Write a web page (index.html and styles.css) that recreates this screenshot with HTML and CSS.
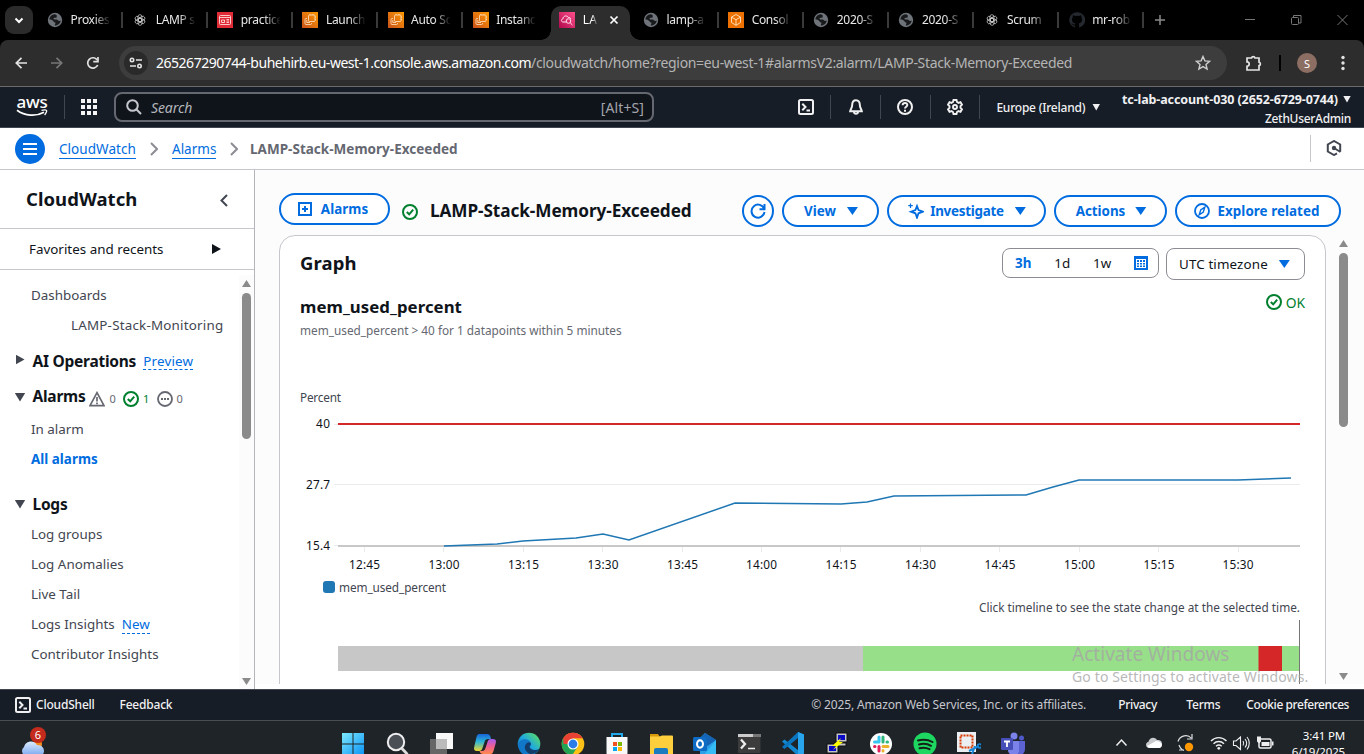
FILE: index.html
```html
<!DOCTYPE html>
<html lang="en">
<head>
<meta charset="utf-8">
<title>LAMP-Stack-Memory-Exceeded | CloudWatch</title>
<link rel="stylesheet" href="styles.css">
</head>
<body>
<svg class="defs" aria-hidden="true">
  <linearGradient id="gOr" x1="0" y1="1" x2="1" y2="0"><stop offset="0" stop-color="#c8511b"/><stop offset="1" stop-color="#f90"/></linearGradient>
  <linearGradient id="gPk" x1="0" y1="1" x2="1" y2="0"><stop offset="0" stop-color="#b0084d"/><stop offset="1" stop-color="#ff4f8b"/></linearGradient>
  <linearGradient id="gWin" x1="0" y1="0" x2="1" y2="1"><stop offset="0" stop-color="#7ee8ff"/><stop offset="1" stop-color="#0a94f5"/></linearGradient>
  <linearGradient id="gCp1" x1="0" y1="0" x2="0" y2="1"><stop offset="0" stop-color="#1763d8"/><stop offset=".45" stop-color="#2cb5d8"/><stop offset="1" stop-color="#f0d72c"/></linearGradient>
  <linearGradient id="gCp2" x1="0" y1="0" x2="0" y2="1"><stop offset="0" stop-color="#a45cf0"/><stop offset=".5" stop-color="#ef5f92"/><stop offset="1" stop-color="#ff8b4a"/></linearGradient>
  <linearGradient id="gEd" x1="0" y1="1" x2="1" y2="0"><stop offset="0" stop-color="#0c59a4"/><stop offset=".5" stop-color="#1fa8e0"/><stop offset="1" stop-color="#62e64f"/></linearGradient>
  <linearGradient id="gCl" x1="0" y1="0" x2="0" y2="1"><stop offset="0" stop-color="#dcecff"/><stop offset="1" stop-color="#7fabf0"/></linearGradient>
  <symbol id="globe" viewBox="0 0 16 16"><circle cx="8" cy="8" r="7.2" fill="#6f747b"/><path d="M7.2 2.2C4 2.8 2.4 5.3 2.4 7.6c1.8 0 2.6.3 3.6 1.2 1 .9 1 1.8 2.4 1.8.3 1.2-.6 1.5-.6 3 3.6 0 5.7-2.600 5.900-5-1 .5-2.100.500-2.900-.4C9.900 7 8.300 8 6.300 7.100c.2-1.700 2-1.300 3.300-1.700.5-.8-.2-1.200.2-2.200-.8-.6-1.600-1-2.600-1z" fill="#17191b"/></symbol>
  <symbol id="gpt" viewBox="0 0 16 16"><g fill="none" stroke="#c4c4c4" stroke-width=".8"><rect id="gl" x="5.900" y="2.700" width="4" height="7" rx="2"/><use href="#gl" transform="rotate(60 8 8)"/><use href="#gl" transform="rotate(120 8 8)"/><use href="#gl" transform="rotate(180 8 8)"/><use href="#gl" transform="rotate(240 8 8)"/><use href="#gl" transform="rotate(300 8 8)"/></g></symbol>
  <symbol id="ec2" viewBox="0 0 16 16"><path d="M0 0h16v16H0z" fill="url(#gOr)"/><g fill="none" stroke="#ffe6c8" stroke-width=".8"><rect x="6.500" y="3" width="6.500" height="6.500" rx="1"/><path d="M5 6.500H4q-1 0-1 1v4q0 1 1 1h4.500q1 0 1-1v-.500M4.800 8v2.500H8M8 3V2M11 3V2M13 5h1M13 7.500h1"/></g></symbol>
  <symbol id="red" viewBox="0 0 16 16"><path d="M0 0h16v16H0z" fill="#e02c36"/><g fill="none" stroke="#ffd9d9" stroke-width=".9"><rect x="2.500" y="3.500" width="11" height="9" rx="1"/><path d="M2.500 5.500h11M4.500 8h3v2.500h-3zM9.500 7.500H12M9.500 9H12M9.500 10.500H12"/></g></symbol>
  <symbol id="cw" viewBox="0 0 16 16"><path d="M0 0h16v16H0z" fill="url(#gPk)"/><g fill="none" stroke="#ffe3ee" stroke-width="1"><path d="M7 10H4C1.800 9.800 2 6.900 4 6.800 4 3.500 8.500 3.100 9.300 5.500c1.400-.4 2.200.3 2.400 1.300"/><circle cx="9.500" cy="9" r="2.300"/><path d="m11.200 10.800 2.300 2.300"/></g></symbol>
  <symbol id="cube" viewBox="0 0 16 16"><path d="M0 0h16v16H0z" fill="#ed7100"/><path d="m8 2.500 4.500 2.600v5.400L8 13.300 3.500 10.500V5.100zM3.500 5.100 8 7.700l4.500-2.600M8 7.700v5.600" fill="none" stroke="#ffe6c8" stroke-width=".9"/></symbol>
  <symbol id="gh" viewBox="0 0 16 16"><path d="M8 .3a7.700 7.700 0 0 0-2.500 15c.4.100.5-.1.500-.4v-1.500c-2.100.4-2.700-.9-2.700-1-.5-1-.9-1.100-.9-1.100-.5-.4 0-.4 0-.4.700 0 1.200.8 1.200.8.700 1.200 1.900.8 2.400.6 0-.5.300-.8.500-1-1.800-.2-3.500-.9-3.500-3.900 0-.8.300-1.500.8-2.100-.1-.200-.400-1 .1-2.100 0 0 .7-.2 2.200.8a7.500 7.500 0 0 1 3.900 0c1.500-1 2.200-.8 2.200-.8.500 1.100.2 1.900.1 2.100.500.600.8 1.300.8 2.100 0 3-1.800 3.700-3.500 3.900.300.3.500.8.500 1.500V15c0 .200.100.500.500.400A7.700 7.700 0 0 0 8 .3z" fill="#24292f"/></symbol>
  <symbol id="ok" viewBox="0 0 16 16"><g fill="none" stroke="currentColor" stroke-width="2"><circle cx="8" cy="8" r="7"/><path d="m4.800 8 2.400 2.300 4-4.700"/></g></symbol>
  <symbol id="shell" viewBox="0 0 16 16"><g fill="none" stroke="currentColor" stroke-width="2"><rect x="1" y="1" width="14" height="14" rx="1.500"/><path d="m4.300 4.800 3.200 3.200-3.200 3.200M8.500 11.500H12"/></g></symbol>
</svg>

<div class="chrome">
<div class="tabs">
  <div class="tabsearch"><svg width="10" height="7" viewBox="0 0 10 7"><path d="m1.500 1.500 3.500 3.500 3.500-3.500" fill="none" stroke="#fff" stroke-width="2"/></svg></div>
  <div class="tab"><svg><use href="#globe"/></svg><span>Proxies</span></div>
  <div class="tab"><svg><use href="#gpt"/></svg><span>LAMP s</span></div>
  <div class="tab"><svg><use href="#red"/></svg><span>practice</span></div>
  <div class="tab"><svg><use href="#ec2"/></svg><span>Launch</span></div>
  <div class="tab"><svg><use href="#ec2"/></svg><span>Auto Sc</span></div>
  <div class="tab nosep"><svg><use href="#ec2"/></svg><span>Instanc</span></div>
  <div class="tab active"><svg><use href="#cw"/></svg><span>LA</span><svg class="x" viewBox="0 0 10 10"><path d="m1.500 1.500 7 7m0-7-7 7" stroke="#fff" stroke-width="1.700"/></svg></div>
  <div class="tab"><svg><use href="#globe"/></svg><span>lamp-a</span></div>
  <div class="tab"><svg><use href="#cube"/></svg><span>Consol</span></div>
  <div class="tab"><svg><use href="#globe"/></svg><span>2020-S</span></div>
  <div class="tab"><svg><use href="#globe"/></svg><span>2020-S</span></div>
  <div class="tab"><svg><use href="#gpt"/></svg><span>Scrum</span></div>
  <div class="tab"><svg><use href="#gh"/></svg><span>mr-rob</span></div>
  <svg class="plus" viewBox="0 0 12 12"><path d="M6 1v10M1 6h10" stroke="#8a8a8a" stroke-width="1.500"/></svg>
  <svg class="winctl" viewBox="0 0 106 14"><g fill="none" stroke="#777"><path d="M1 6.500h10M93.500 2l10 10m0-10-10 10"/><rect x="47.500" y="4.500" width="7" height="7" rx="1"/><path d="M49.500 4.500v-2h7.500v7.500h-2"/></g></svg>
</div>

<div class="toolbar">
  <svg class="navi" width="92" height="16" viewBox="0 0 92 16"><g fill="none" stroke-width="1.700"><path d="M13 8H2.500M7.500 2.800 2.300 8l5.200 5.200" stroke="#e3e3e3"/><path d="M37 8h10.500M42.500 2.800 47.700 8l-5.200 5.200" stroke="#777"/><path d="M83.200 5A5.200 5.200 0 1 0 83.700 10" stroke="#e3e3e3"/><path d="M84 2v4.700h-4.700" stroke="#e3e3e3"/></g></svg>
  <div class="omni">
    <div class="site"><svg width="14" height="12" viewBox="0 0 14 12"><g fill="none" stroke="#e3e3e3" stroke-width="1.600"><circle cx="3" cy="3" r="1.700"/><path d="M7 3h6M1 9h6"/><circle cx="10.500" cy="9" r="1.700"/></g></svg></div>
    <span class="host">265267290744-buhehirb.eu-west-1.console.aws.amazon.com</span><span class="path">/cloudwatch/home?region=eu-west-1#alarmsV2:alarm/LAMP-Stack-Memory-Exceeded</span>
    <svg class="star" width="16" height="16" viewBox="0 0 16 16"><path d="m8 1.500 1.900 4.400 4.700.4L11 9.400l1.100 4.700L8 11.600l-4.100 2.500L5 9.400 1.400 6.300l4.700-.4z" fill="none" stroke="#cfcfcf" stroke-width="1.400"/></svg>
  </div>
  <svg class="ext" width="18" height="18" viewBox="0 0 18 18"><path d="M2 4h4.500a1.800 1.800 0 0 1 3.500 0H14v4.200a1.800 1.800 0 0 1 0 3.500V16H2v-3.700a2.200 2.200 0 0 0 0-4.400z" fill="none" stroke="#e3e3e3" stroke-width="1.700"/></svg>
  <div class="bar"></div>
  <div class="avatar">S</div>
  <svg class="kebab" width="4" height="16" viewBox="0 0 4 16"><g fill="#e3e3e3"><circle cx="2" cy="2.500" r="1.700"/><circle cx="2" cy="8" r="1.700"/><circle cx="2" cy="13.500" r="1.700"/></g></svg>
</div>
</div>

<div class="awsnav">
  <div class="logo"><span>aws</span><svg width="32" height="8" viewBox="0 0 32 8"><path d="M1 1.200c8 6 19 6.500 27 2" fill="none" stroke="#fff" stroke-width="1.700"/><path d="M25.500 1.300c2.200-.6 4.500-.5 5 .1s-.4 3-1.900 4.600" fill="none" stroke="#fff" stroke-width="1.300"/></svg></div>
  <i class="vsep v1"></i>
  <svg class="grid" width="16" height="16" viewBox="0 0 16 16" fill="#f5f5f5"><path d="M0 0h4v4H0zM6 0h4v4H6zM12 0h4v4h-4zM0 6h4v4H0zM6 6h4v4H6zM12 6h4v4h-4zM0 12h4v4H0zM6 12h4v4H6zM12 12h4v4h-4z"/></svg>
  <div class="search"><svg width="16" height="16" viewBox="0 0 16 16"><g fill="none" stroke="#c6c6cd" stroke-width="2"><circle cx="6.500" cy="6.500" r="5.300"/><path d="m10.300 10.300 4.700 4.700"/></g></svg><em>Search</em><span>[Alt+S]</span></div>
  <div class="tools">
    <svg><use href="#shell"/></svg><i class="vsep"></i>
    <svg viewBox="0 0 16 16"><path d="M8 1.200c-2.800 0-3.800 2.100-3.800 4.600 0 3.200-1.700 4.400-2 6.400h11.600c-.3-2-2-3.200-2-6.400C11.800 3.300 10.800 1.200 8 1.200zM6 13c.2 2.400 3.800 2.400 4 0" fill="none" stroke="#f0f0f0" stroke-width="2"/></svg><i class="vsep"></i>
    <svg viewBox="0 0 16 16"><g fill="none" stroke="#f0f0f0" stroke-width="2"><circle cx="8" cy="8" r="7"/><path d="M5.600 6.300c.2-3.100 4.800-2.900 4.700-.3C10.300 7.800 8 7.600 8 9.600M8 10.800v2"/></g></svg><i class="vsep"></i>
    <svg viewBox="0 0 16 16"><g fill="none" stroke="#f0f0f0" stroke-width="1.900"><path d="M6.500 1h3l.5 2 1.500.9 2-.7 1.500 2.500L13.500 7.200v1.600l1.500 1.500-1.500 2.500-2-.7L10 13l-.5 2h-3L6 13l-1.500-.9-2 .7L1 10.300l1.500-1.500V7.200L1 5.700l1.500-2.500 2 .7L6 3z"/><circle cx="8" cy="8" r="2"/></g></svg><i class="vsep"></i>
  </div>
  <div class="region">Europe (Ireland)<b class="tri sm"></b></div>
  <div class="account"><div class="acct">tc-lab-account-030 (2652-6729-0744)<b class="tri sm"></b></div><div class="user">ZethUserAdmin</div></div>
</div>

<div class="crumbs">
  <div class="burger"><i></i><i></i><i></i></div>
  <a>CloudWatch</a>
  <svg class="chev" viewBox="0 0 8 14"><path d="m1 1 6 6-6 6" fill="none" stroke="#8c8c94" stroke-width="2"/></svg>
  <a class="al">Alarms</a>
  <svg class="chev" viewBox="0 0 8 14"><path d="m1 1 6 6-6 6" fill="none" stroke="#8c8c94" stroke-width="2"/></svg>
  <span class="here">LAMP-Stack-Memory-Exceeded</span>
  <div class="hex"><svg width="16" height="16" viewBox="0 0 16 16"><path d="M11 13.300 8 15l-6.200-3.500v-7L8 1l6.200 3.500v7.200M8 8l6.500 4" fill="none" stroke="#424650" stroke-width="2"/><circle cx="8" cy="8" r="2.200" fill="#424650"/></svg></div>
</div>

<div class="body">
  <aside>
    <div class="shead"><span>CloudWatch</span><svg width="8" height="13" viewBox="0 0 8 13"><path d="M7 1 1.500 6.500 7 12" fill="none" stroke="#424650" stroke-width="2"/></svg></div>
    <div class="fav"><span>Favorites and recents</span><b class="rt"></b></div>
    <div class="scroller">
      <nav>
        <div class="row">Dashboards</div>
        <div class="row sub">LAMP-Stack-Monitoring</div>
        <div class="row sec ai"><b class="rt g"></b><strong>AI Operations</strong><a class="dash">Preview</a></div>
        <div class="row sec alr"><b class="tri g"></b><strong>Alarms</strong>
          <svg viewBox="0 0 16 16"><path d="M8 1.700 15 14.700H1zM8 6v4.500M8 11.500v1.800" fill="none" stroke="#656871" stroke-width="1.700"/></svg><small>0</small>
          <svg class="green"><use href="#ok"/></svg><small class="green">1</small>
          <svg viewBox="0 0 16 16"><circle cx="8" cy="8" r="7" fill="none" stroke="#656871" stroke-width="1.800"/><path d="M4 7h2v2H4zM7 7h2v2H7zM10 7h2v2h-2z" fill="#656871"/></svg><small>0</small></div>
        <div class="row">In alarm</div>
        <div class="row cur">All alarms</div>
        <div class="row sec lg"><b class="tri g"></b><strong>Logs</strong></div>
        <div class="row">Log groups</div>
        <div class="row">Log Anomalies</div>
        <div class="row">Live Tail</div>
        <div class="row">Logs Insights<a class="dash nw">New</a></div>
        <div class="row">Contributor Insights</div>
      </nav>
      <div class="sb side"><b class="up"></b><i></i><b class="dn"></b></div>
    </div>
  </aside>

  <main>
    <div class="head">
      <div class="btn alarms"><svg width="14" height="14" viewBox="0 0 14 14"><path d="M1 1h12v12H1zM7 4v6M4 7h6" fill="none" stroke="currentColor" stroke-width="2"/></svg>Alarms</div>
      <svg class="okh green"><use href="#ok"/></svg>
      <h1>LAMP-Stack-Memory-Exceeded</h1>
      <div class="acts">
        <div class="btn rf"><svg width="16" height="16" viewBox="0 0 16 16"><path d="M14.200 6A6.500 6.500 0 1 0 14.500 9M14.500 1v5.200H9.500" fill="none" stroke="currentColor" stroke-width="2"/></svg></div>
        <div class="btn vw">View<b class="tri"></b></div>
        <div class="btn iv"><svg width="16" height="16" viewBox="0 0 16 16"><path d="M9 3 10.500 7 15 8.700 10.500 10.300 9 14.700 7.400 10.300 3 8.700 7.400 7z" fill="none" stroke="currentColor" stroke-width="1.800"/><path d="M2.500.5v4.500M.3 2.700h4.500" stroke="currentColor" stroke-width="1.200"/></svg>Investigate<b class="tri"></b></div>
        <div class="btn ac">Actions<b class="tri"></b></div>
        <div class="btn ex"><svg width="16" height="16" viewBox="0 0 16 16"><g fill="none" stroke="currentColor"><circle cx="8" cy="8" r="7" stroke-width="1.800"/><path d="M10.800 4.200 9.300 9 5.200 11.800 6.700 7z" stroke-width="1.400"/></g></svg>Explore related</div>
      </div>
    </div>
    <div class="pane">
      <section class="card">
        <div class="ctop"><h2>Graph</h2>
          <div class="seg"><b>3h</b><span>1d</span><span>1w</span><svg width="14" height="14" viewBox="0 0 14 14"><path d="M0 0h14v14H0z" fill="#006ce0"/><path d="M2 3h10v9H2z" fill="#fff"/><path d="M3 4h2v2H3zM6 4h2v2H6zM9 4h2v2H9zM3 7h2v1.500H3zM6 7h2v1.500H6zM9 7h2v1.500H9zM3 9.500h2V11H3zM6 9.500h2V11H6zM9 9.500h2V11H9z" fill="#006ce0"/></svg></div>
          <div class="tz">UTC timezone<b class="tri bl"></b></div>
        </div>
        <div class="mrow"><h3>mem_used_percent</h3><div class="okk green"><svg><use href="#ok"/></svg>OK</div></div>
        <p class="desc">mem_used_percent &gt; 40 for 1 datapoints within 5 minutes</p>
        <svg class="chart" width="1005" height="210" viewBox="300 388 1005 210">
          <g class="lab"><text x="300" y="402" textLength="41" class="mut">Percent</text>
            <text x="316" y="428" textLength="14">40</text><text x="306" y="489" textLength="24">27.7</text><text x="306" y="550" textLength="24">15.4</text></g>
          <path d="M334 424.500h5M334 484.500h966M334 545.500h4M364.500 547v5M443.500 547v5M523.500 547v5M602.500 547v5M682.500 547v5M761.500 547v5M840.500 547v5M920.500 547v5M999.500 547v5M1079.500 547v5M1158.500 547v5M1238.500 547v5" stroke="#e9ebed"/>
          <path d="M338 546h962" stroke="#c8c8c8" stroke-width="2"/>
          <path d="M338 424h962" stroke="#d62728" stroke-width="2"/>
          <polyline points="444,546 497,544 523,541 576,538 603,534 629,540 735,503 841,504 867,502 894,496 1026,495 1053,487 1079,480 1238,480 1291,478" fill="none" stroke="#1f77b4" stroke-width="1.500"/>
          <g class="lab mid"><text x="364.500" y="569" textLength="31">12:45</text><text x="444" y="569" textLength="31">13:00</text><text x="523.500" y="569" textLength="31">13:15</text><text x="603" y="569" textLength="31">13:30</text><text x="682.500" y="569" textLength="31">13:45</text><text x="761.500" y="569" textLength="31">14:00</text><text x="841" y="569" textLength="31">14:15</text><text x="920.500" y="569" textLength="31">14:30</text><text x="1000" y="569" textLength="31">14:45</text><text x="1079.500" y="569" textLength="31">15:00</text><text x="1159" y="569" textLength="31">15:15</text><text x="1238" y="569" textLength="31">15:30</text></g>
          <rect x="323" y="581" width="12" height="12" rx="3" fill="#1f77b4"/>
          <g class="lab"><text x="339" y="592" textLength="107" class="mut">mem_used_percent</text></g>
        </svg>
        <p class="click">Click timeline to see the state change at the selected time.</p>
        <svg class="chart" width="1005" height="70" viewBox="300 618 1005 70"><path d="M338 646h525v25H338z" fill="#c7c7c7"/><path d="M863 646h437v25H863z" fill="#98df8a"/><path d="M1258.500 646H1282v25h-23.500z" fill="#d62728"/><path d="M1299.500 620v68" stroke="#777"/></svg>
      </section>
      <div class="sb mainsb"><b class="up"></b><i></i><b class="dn"></b></div>
    </div>
  </main>
</div>

<footer>
  <svg><use href="#shell"/></svg><span class="cs">CloudShell</span><span class="fb">Feedback</span>
  <div class="legal"><span class="copy">© 2025, Amazon Web Services, Inc. or its affiliates.</span><span class="pv">Privacy</span><span class="tm">Terms</span><span class="ck">Cookie preferences</span></div>
</footer>

<div class="taskbar">
  <div class="weather"><svg width="26" height="16" viewBox="0 0 26 16"><circle cx="19" cy="5" r="4" fill="#f28a1c"/><path d="M5 16a5 5 0 0 1 0-8C6 2 15 0 18 6c5 0 7 3 7 6 0 2-1 4-3 4z" fill="url(#gCl)"/></svg><span>6</span></div>
  <div class="apps">
    <svg viewBox="0 0 24 24"><path d="M1 1h10.500v10.500H1zM12.500 1H23v10.500H12.500zM1 12.500h10.500V23H1zM12.500 12.500H23V23H12.500z" fill="url(#gWin)"/></svg>
    <svg viewBox="0 0 24 24"><circle cx="11" cy="10" r="8.200" fill="#4a4f55" stroke="#eee" stroke-width="2"/><path d="m16.500 16 6 6.500" stroke="#ddd" stroke-width="2.800"/></svg>
    <svg viewBox="0 0 24 24"><path d="M7 1h17v16H7z" fill="#f8f8f8"/><path d="M1 7h17v17H1z" fill="#666"/><path d="M7 7h11v10H7z" fill="#bbb"/></svg>
    <svg viewBox="0 0 24 24"><path d="M6 2h8c2 0 3 1 3.500 3L18 7h-3c-2 0-3 1-3.500 3l-2 6c-.5 2-1.500 3-3.500 3H4c-2.500 0-3.500-1.500-2.800-4L3.500 5C4 3 5 2 6 2z" fill="url(#gCp1)"/><path d="M18 22h-8c-2 0-3-1-3.500-3h2.500c2 0 3-1 3.500-3l2-6c.5-2 1.500-3 3.500-3h2c2.500 0 3.500 1.500 2.800 4L20.500 19c-.5 2-1.500 3-2.500 3z" fill="url(#gCp2)"/></svg>
    <svg viewBox="0 0 24 24"><circle cx="12" cy="12" r="11.300" fill="url(#gEd)"/><path d="M1 14C1 6 12 5 14 11c1 3-2 3-1 5 1 3 7 3 9 1-3 7-15 9-19 2z" fill="#1177c8"/><path d="M10 11c-4 3-2 9 3 11 4 0 8-2 9.500-5-4 2-10 1-10-3 1-1 2-2 1-3-1-1-2-1-3.500 0z" fill="#123c69"/></svg>
    <svg viewBox="0 0 24 24"><circle cx="12" cy="12" r="11.300" fill="#fbc116"/><path d="M12 12 2.200 6.300A11.300 11.300 0 0 0 11 23.300L16.800 14.500z" fill="#23a455"/><path d="M12 12H2.500L2.200 6.300A11.300 11.300 0 0 1 21.800 6.300H12z" fill="#e94235"/><circle cx="12" cy="12" r="5.500" fill="#fff"/><circle cx="12" cy="12" r="4.400" fill="#2a7de9"/></svg>
    <svg viewBox="0 0 24 24"><path d="M7 6V2h10v4" fill="none" stroke="#22a7e8" stroke-width="2"/><path d="M1.500 5h21v16q0 2-2 2h-17q-2 0-2-2z" fill="#f8f8f8"/><path d="M8 10h4v4H8z" fill="#f25022"/><path d="M13 10h4v4h-4z" fill="#7fba00"/><path d="M8 15h4v4H8z" fill="#00a4ef"/><path d="M13 15h4v4h-4z" fill="#ffb900"/></svg>
    <svg viewBox="0 0 24 24"><path d="M1 2h8l2 3H1z" fill="#d89a0a"/><path d="M1 4.500h9.500L13 3.500h10q1 0 1 1V22H1z" fill="#fdcf3c"/><path d="M5 22v-4q0-2 2-2h10q2 0 2 2v4z" fill="#1b7bc0"/></svg>
    <svg viewBox="0 0 24 24"><path d="m12 1 11 7v15H7V6z" fill="#2b9fe8"/><path d="m12 1 11 7-10 7-7-8z" fill="#1563b5"/><path d="M23 8v15H11z" fill="#35bbf5"/><rect x="0" y="5" width="14" height="14" rx="1.500" fill="#0f6cc4"/><ellipse cx="7" cy="12" rx="3" ry="3.700" fill="none" stroke="#fff" stroke-width="2"/></svg>
    <svg viewBox="0 0 24 24"><rect x="1" y="2" width="22.500" height="19" rx="1" fill="#3c3c3c"/><path d="M1 2h22.500v3H1z" fill="#ccc"/><path d="M16 2h7.500v3H16z" fill="#777"/><path d="m4 7.500 4 4.500-4 4.500" fill="none" stroke="#eee" stroke-width="2.300"/><path d="M11 16.500h7" stroke="#eee" stroke-width="1.500"/></svg>
    <svg viewBox="0 0 24 24"><path d="m17 0 6 2.500v19L17 24 1 9.500l2.500-2L17 18z" fill="#1388d1"/><path d="M17 0v6L3.500 17 1 15z" fill="#0b74bf"/><path d="m17 0 6 2.500v19L17 24z" fill="#29a5ee"/></svg>
    <svg viewBox="0 0 24 24"><g fill="#c5c5c5" stroke="#111"><path d="M11 1h11v9H11zM9 11h12v3H9zM2 12h11v9H2zM0 22h14v3H0z"/></g><path d="M13 3h7v5h-7zM4 14h7v5H4z" fill="#0909c8"/><path d="m16 6-9 8h4l-3 4 10-8h-4z" fill="#ff0"/></svg>
    <svg viewBox="0 0 24 24"><circle cx="12" cy="12" r="11" fill="#fff"/><g stroke-width="3" stroke-linecap="round"><path d="M10 5v5M5.500 10H10" stroke="#36c5f0"/><path d="M14 5v5M18.500 10H18" stroke="#2eb67d"/><path d="M14 14.500h5M14 19v-.5" stroke="#ecb22e"/><path d="M10 14.500V19M5.500 14.500H6" stroke="#e01e5a"/></g></svg>
    <svg viewBox="0 0 24 24"><circle cx="12" cy="12" r="11.500" fill="#1ed760"/><path d="M5 8.500c5-1.500 10-1 14.500 1.500M6 12.500c4-1.200 8.500-.8 12 1.300M6.500 16.200c3.500-1 7-.6 10 1" fill="none" stroke="#152018" stroke-width="2" stroke-linecap="round"/></svg>
    <svg viewBox="0 0 24 24"><path d="M0 0h19v20H0z" fill="#eceff2"/><path d="M3.500 3.500h12v12h-12z" fill="none" stroke="#d83b01" stroke-width="2" stroke-dasharray="2 1"/><path d="m12 19 10-5M14 25l4-11" stroke="#1887d8" stroke-width="2"/><circle cx="22.500" cy="14" r="2" fill="none" stroke="#1887d8" stroke-width="1.500"/></svg>
    <svg viewBox="0 0 24 24"><circle cx="13" cy="4" r="3.500" fill="#7b83eb"/><circle cx="20.500" cy="6" r="2.500" fill="#5059c9"/><path d="M8 9h16v8c0 4-3 6-5 6H12c-3 0-4-2-4-5z" fill="#5b63d3"/><path d="M7 9h11v9c0 4-3 5-5 5-4 0-6-2-6-5z" fill="#7b83eb"/><rect x="0" y="6" width="12" height="12" rx="1" fill="#464eb8"/><path d="M3 9.500h6M6 9.500V15" stroke="#fff" stroke-width="1.800"/></svg>
  </div>
  <svg class="tray" width="160" height="20" viewBox="0 0 160 20">
    <path d="m1.500 12.500 5-5.500 5 5.500" fill="none" stroke="#eee" stroke-width="1.500"/>
    <path d="M34 15a3.200 3.200 0 0 1-.5-6.300C34.500 4 40 3.500 42 7c4-.5 5 2 5 4 0 2.500-1.500 4-3 4z" fill="#c8cacd"/><path d="m32 13 9-5c3 0 5.500 1.500 6 4-.5 2-1.500 3-3 3H34z" fill="#fff"/>
    <path d="M63 8.500C65 2 73 1 76 5M77 1v5h-5M64 17h5M64 12c1 3 2 4.500 5 5.500" fill="none" stroke="#ddd" stroke-width="1.200"/><circle cx="74" cy="14" r="4.200" fill="#ff9800"/>
    <path d="M96 8c4.500-4.500 11-4.500 15.500 0M98.500 10.700c3-3 7.500-3 10.500 0M101 13.300c1.700-1.500 4-1.500 5.700 0" fill="none" stroke="#eee" stroke-width="1.400"/><circle cx="103.800" cy="15.300" r="1.400" fill="#eee"/>
    <path d="M118.500 8h2.500l4.500-4v12.500l-4.500-4h-2.500zM128 8c1 1.500 1 3 0 4.500M130 6c2 2.500 2 6 0 8.500M132 4c3 3.500 3 9 0 12.500" fill="none" stroke="#eee" stroke-width="1.100"/>
    <rect x="144" y="6" width="12" height="9" rx="1.500" fill="none" stroke="#eee" stroke-width="1.500"/><path d="M146.500 9h8v4h-8zM157 8.500h1.500v4H157zM142 3.500h4v5l-2 2-2-2z" fill="#eee"/>
  </svg>
  <div class="clock"><span>3:41 PM</span><span>6/19/2025</span></div>
</div>
<div class="watermark"><div class="w1">Activate Windows</div><div class="w2">Go to Settings to activate Windows.</div></div>
</body>
</html>
```
FILE: styles.css
```css
* { box-sizing: border-box; }
body { margin: 0; width: 1364px; height: 754px; overflow: hidden; display: flex; flex-direction: column; background: #fff; color: #0f141a; font-family: "Noto Sans", "Open Sans", sans-serif; font-size: 13.4px; position: relative; white-space: nowrap; }
svg { display: block; flex: none; }
.defs { position: absolute; width: 0; height: 0; }
h1, h2, h3, p { margin: 0; }
.green { color: #00802f; }

.chrome { background: #000; flex: none; }
.tabs { height: 40px; display: flex; align-items: center; padding-left: 5px; }
.tabsearch { width: 28px; height: 28px; border-radius: 9px; background: #2b2b2b; display: flex; align-items: center; justify-content: center; margin-right: 4.500px; flex: none; }
.tab { width: 85.150px; flex: none; height: 16px; padding-left: 9.500px; display: flex; gap: 7.500px; align-items: center; border-right: 2px solid #3a3a3a; color: #e8e8e8; font-size: 12px; line-height: 16px; }
.tab svg { width: 16px; height: 16px; }
.tab span { width: 42px; letter-spacing: -.3px; -webkit-mask-image: linear-gradient(90deg, #000 55%, transparent 95%); mask-image: linear-gradient(90deg, #000 55%, transparent 95%); }
.nosep { border-color: transparent; }
.tab.active { height: 34px; width: 79.150px; margin: 6px 3px 0 3px; padding: 0 0 6px 8px; background: #2d2d2d; border: 0; border-radius: 10px 10px 0 0; color: #fff; position: relative; }
.tab.active::before, .tab.active::after { content: ""; position: absolute; bottom: 0; width: 10px; height: 10px; }
.tab.active::before { left: -10px; background: radial-gradient(circle at 0 0, transparent 9.500px, #2d2d2d 10px); }
.tab.active::after { right: -10px; background: radial-gradient(circle at 100% 0, transparent 9.500px, #2d2d2d 10px); }
.tab.active span { width: 16px; letter-spacing: 0; }
.tab.active .x { width: 10px; height: 10px; margin-left: 3px; }
.plus { width: 12px; height: 12px; margin-left: 10px; }
.winctl { width: 106px; height: 14px; margin-left: auto; margin-right: 14px; }

.toolbar { height: 47px; background: #2d2d2d; border-bottom: 1px solid #6a6a6a; border-radius: 8px 8px 0 0; display: flex; align-items: center; padding-left: 14px; }
.omni { margin-left: 13px; width: 1108px; height: 34px; border-radius: 17px; background: #3d3d3d; display: flex; align-items: center; padding-left: 5px; font-size: 14px; line-height: 18px; padding-bottom: 1px; }
.site { width: 24px; height: 24px; border-radius: 50%; background: #2a2a2a; display: flex; align-items: center; justify-content: center; margin-right: 8px; flex: none; }
.host { color: #fff; width: 375px; letter-spacing: -.48px; }
.path { color: #b4b4b4; letter-spacing: -.33px; }
.star { margin-left: auto; margin-right: 16px; }
.ext { margin-left: 18px; }
.bar { width: 2px; height: 16px; background: #000; margin: 0 16px; }
.avatar { width: 20px; height: 20px; border-radius: 50%; background: #8d6e63; color: #fff; font-size: 11px; display: flex; align-items: center; justify-content: center; }
.kebab { margin-left: 24px; }

.awsnav { height: 41px; flex: none; background: #161d26; border-bottom: 1px solid #424650; display: flex; align-items: center; color: #f0f0f2; }
.logo { width: 32px; margin-left: 16px; color: #fff; display: flex; flex-direction: column; align-items: center; }
.logo span { font: 500 17px/17px "Noto Sans", sans-serif; letter-spacing: -.3px; height: 16px; margin-top: -5px; }
.vsep { width: 1px; height: 24px; background: #424650; flex: none; }
.v1 { margin: 0 16px; }
.search { width: 540px; height: 30px; margin-left: 17px; border: 2px solid #656871; border-radius: 8px; background: #0f141a; color: #a4a4ad; display: flex; align-items: center; padding: 0 8px 0 10px; font-size: 14px; }
.search em { margin-left: 9px; font-size: 14px; letter-spacing: -.1px; color: #b4b4bb; }
.search span { margin-left: auto; font-size: 14px; letter-spacing: .1px; }
.tools { display: flex; align-items: center; margin-left: 144px; gap: 16.350px; }
.tools svg { width: 16px; height: 16px; }
.region { margin-left: 16px; font-size: 12px; font-weight: 500; letter-spacing: -.22px; display: flex; align-items: center; gap: 7px; width: 110px; }
.tri { display: inline-block; width: 11px; height: 8px; background: currentColor; clip-path: polygon(0 0, 100% 0, 50% 100%); flex: none; }
.tri.sm { width: 8px; height: 7px; }
.account { margin-left: auto; margin-right: 13px; text-align: right; line-height: 19px; font-size: 12px; padding-top: 3px; }
.acct { font-weight: 700; font-size: 12.500px; letter-spacing: -.11px; display: flex; align-items: center; gap: 5px; }
.user { font-weight: 500; letter-spacing: -.3px; }

.crumbs { height: 42px; flex: none; border-bottom: 1px solid #c6c6cd; display: flex; align-items: center; padding-left: 15px; font-size: 13.500px; }
.burger { width: 30px; height: 30px; border-radius: 50%; background: #006ce0; display: flex; flex-direction: column; gap: 3px; justify-content: center; align-items: center; margin-right: 14px; }
.burger i { width: 14px; height: 2px; background: #fff; }
.crumbs a { color: #006ce0; width: 77px; height: 20px; line-height: 20px; border-bottom: 1px solid #006ce0; letter-spacing: .05px; }
.crumbs .al { width: 44px; letter-spacing: 0; }
.chev { width: 8px; height: 14px; margin: 0 14px; }
.here { color: #656871; font-weight: 700; letter-spacing: .02px; margin-left: -2px; }
.hex { margin-left: auto; height: 27px; border-left: 1px solid #c6c6cd; padding: 5px 22px 0 15px; }

.body { display: flex; height: 519px; flex: none; }
aside { width: 255px; border-right: 1px solid #b4b4bb; display: flex; flex-direction: column; }
.shead { height: 59px; border-bottom: 1px solid #c6c6cd; display: flex; justify-content: space-between; padding: 14px 26px 0; font-size: 18.500px; font-weight: 700; line-height: 29px; letter-spacing: .05px; }
.shead svg { margin-top: 10px; }
.fav { height: 41px; border-bottom: 1px solid #c6c6cd; display: flex; align-items: center; justify-content: space-between; padding: 0 33px 0 29px; }
.rt { width: 9px; height: 10px; background: currentColor; clip-path: polygon(0 0, 100% 50%, 0 100%); flex: none; }
.scroller { display: flex; height: 419px; padding-top: 5px; }
nav { width: 239px; padding-top: 5px; }
.row { height: 30px; line-height: 30px; padding-left: 31px; color: #424650; }
.row.sub { padding-left: 71px; letter-spacing: .2px; }
.row.sec { padding-left: 14.500px; display: flex; align-items: center; color: #0f141a; font-size: 15.500px; letter-spacing: -.25px; }
.row .g { color: #424650; width: 11px; height: 9px; margin-right: 7px; }
.row .rt.g { width: 9px; height: 10px; margin: -3px 8px 0 0; }
.row.ai { height: 42px; padding-left: 15.500px; }
.dash, .row .dash { color: #006ce0; font-size: 13.400px; border-bottom: 1px dashed #006ce0; line-height: 16px; margin-left: 7px; letter-spacing: .2px; }
.row .nw { letter-spacing: 0; }
.alr svg { width: 16px; height: 16px; margin: 3px 0 0 4px; }
.alr small { font-size: 11px; margin: 3px 4px 0 4px; color: #656871; line-height: 14px; }
.alr small + svg { margin-left: 3.500px; }
.alr .green { color: #00802f; }
.alr { margin-bottom: 2px; }
.alr strong { position: relative; top: -1px; }
.cur { color: #006ce0; font-weight: 700; letter-spacing: .02px; }
.lg { margin-top: 15px; }
.sb { width: 15px; display: flex; flex-direction: column; align-items: center; background: #fcfcfc; padding: 5px 0; }
.sb i { width: 9px; border-radius: 5px; background: #8b8b8b; margin-top: 6px; }
.sb b { width: 9px; height: 7px; background: #8b8b8b; clip-path: polygon(50% 0, 100% 100%, 0 100%); }
.sb .dn { clip-path: polygon(0 0, 100% 0, 50% 100%); margin-top: auto; }
.side { padding-bottom: 4px; }
.side i { height: 146px; }

main { width: 1109px; background: #fff; }
.head { height: 65px; background: #fcfcfd; display: flex; align-items: flex-start; padding: 23px 0 0 24px; }
.btn { height: 32px; border: 2px solid #006ce0; border-radius: 16px; background: #fff; color: #006ce0; font-weight: 700; font-size: 13.400px; letter-spacing: 0; display: flex; align-items: center; justify-content: center; }
.alarms { width: 111px; gap: 9px; padding-right: 3px; letter-spacing: .05px; }
.okh { width: 16px; height: 16px; margin: 11px 12px 0; }
h1 { font-size: 17.200px; line-height: 28px; margin-top: 4px; letter-spacing: -.08px; }
.acts { display: flex; gap: 8px; margin: 2px 23px 0 auto; }
.rf { width: 32px; }
.vw { width: 97px; gap: 11px; padding-left: 1px; }
.iv { width: 159px; gap: 11px; letter-spacing: -.25px; padding-left: 1px; }
.iv svg { margin-right: -5px; }
.ac { width: 113px; gap: 10px; letter-spacing: -.05px; padding-left: 1px; }
.ex { width: 166px; gap: 8px; padding-right: 3px; letter-spacing: .05px; }
.pane { height: 449px; overflow: hidden; display: flex; background: #fcfcfd; padding-left: 24px; }
.card { width: 1047px; height: 520px; border: 1px solid #c6c6cd; border-radius: 16px; background: #fff; padding: 12px 20px 0; }
.mainsb { margin-left: 10px; padding: 5px 0 4px; }
.mainsb i { height: 174px; }
.ctop { display: flex; height: 32px; }
h2 { font-size: 18.500px; line-height: 29px; margin-right: auto; letter-spacing: .1px; }
.seg { width: 157px; height: 30px; border: 1px solid #8c8c94; border-radius: 8px; margin-right: 7px; display: flex; align-items: center; justify-content: space-between; padding: 0 10px 0 12px; }
.seg b { color: #006ce0; }
.tz { width: 139px; height: 32px; border: 1px solid #8c8c94; border-radius: 8px; display: flex; align-items: center; padding-left: 12px; gap: 11px; letter-spacing: .12px; }
.bl { color: #006ce0; }
.mrow { display: flex; justify-content: space-between; height: 20px; margin-top: 17px; }
h3 { font-size: 16.800px; line-height: 20px; letter-spacing: .05px; }
.okk { display: flex; gap: 4px; height: 20px; margin-top: -5px; align-items: center; font-size: 13.800px; }
.okk svg { width: 16px; height: 16px; }
.desc { font-size: 11.800px; line-height: 20px; margin-top: 3px; color: #656871; }
.chart { margin-top: 48px; }
.lab { font-size: 11.800px; fill: #0f141a; }
.lab .mut { fill: #424650; }
.mid { text-anchor: middle; }
.click { text-align: right; font-size: 11.800px; line-height: 19px; height: 20px; padding-right: 5px; color: #424650; }
.click + .chart { margin-top: 0; }

footer { height: 32px; flex: none; background: #161d26; border-top: 1px solid #424650; border-bottom: 1px solid #4a4d52; display: flex; align-items: center; padding: 0 0 1px 15px; color: #f0f0f2; font-size: 12px; font-weight: 500; letter-spacing: -.2px; }
footer svg { width: 16px; height: 16px; margin-right: 5px; }
.cs { width: 83.500px; }
.legal { margin-left: auto; margin-right: 15px; display: flex; }
.copy { color: #c6c6cd; width: 307px; font-weight: 400; letter-spacing: -.15px; }
.pv { width: 68px; letter-spacing: -.35px; }
.tm { width: 60px; }
.ck { letter-spacing: -.43px; }

.taskbar { height: 33px; flex: none; background: #1e2428; display: flex; align-items: flex-start; overflow: hidden; }
.weather { position: relative; margin: 18px 0 0 19px; width: 26px; }
.weather span { position: absolute; left: 11px; top: -12px; width: 16px; height: 16px; border-radius: 50%; background: #c42b1c; color: #fff; font-size: 11px; line-height: 16px; text-align: center; }
.apps { display: flex; gap: 20.060px; margin: 11px 0 0 295.500px; }
.apps svg { width: 24px; height: 24px; }
.tray { margin: 12px 0 0 89.600px; }
.clock { margin-left: auto; margin-right: 19px; text-align: right; display: flex; flex-direction: column; color: #fff; font-size: 11.500px; line-height: 16px; padding-top: 7px; letter-spacing: -.15px; }

.watermark { position: absolute; left: 1072px; top: 642px; color: rgba(165, 165, 165, .8); }
.w1 { font-size: 19px; line-height: 24px; letter-spacing: .03px; }
.w2 { font-size: 14px; line-height: 20px; margin-top: 1px; letter-spacing: .13px; }
```
